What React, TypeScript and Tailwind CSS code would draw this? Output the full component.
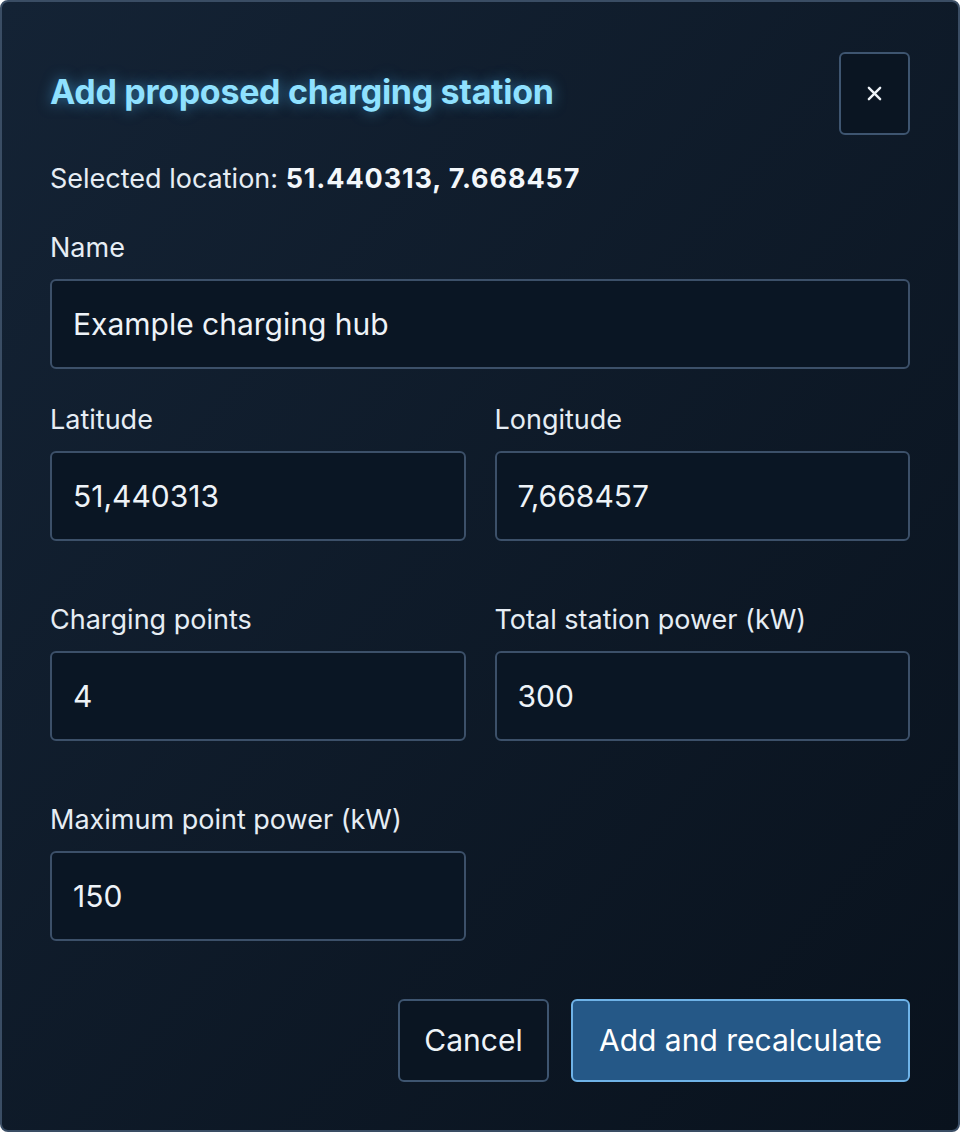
import React from 'react';

const Field = ({ label, value, className = '' }: { label: string; value: string; className?: string }) => (
  <label className={`flex flex-col ${className}`}>
    <span className="text-[27px] leading-[32px] text-[#e6edf4]">{label}</span>
    <input
      readOnly
      value={value}
      className="mt-[15px] h-[90px] w-full rounded-[6px] border-2 border-[#3c5069] bg-[#0a1624] px-[21px] text-[30px] text-[#eef3f8] outline-none"
    />
  </label>
);

export default function App() {
  return (
    <div
      className="h-[1132px] w-[960px] rounded-[8px] border-2 border-[#3a4d64] bg-gradient-to-br from-[#142335] to-[#09121d] pl-[48px] pr-[48px] pt-[50px]"
      style={{ fontFamily: 'Inter, "Noto Sans", sans-serif' }}
    >
      {/* Header */}
      <div className="flex h-[83px] items-center justify-between">
        <h2
          className="mb-[4px] text-[34px] font-bold tracking-[-0.3px] text-[#8fe1ff]"
          style={{ textShadow: '0 0 14px rgba(80, 190, 255, 0.55)' }}
        >
          Add proposed charging station
        </h2>
        <button className="flex h-[83px] w-[71px] items-center justify-center rounded-[6px] border-2 border-[#3e5570] bg-[#0a1522] text-[#eef3f8]">
          <svg width="15" height="15" viewBox="0 0 16 16" fill="none" stroke="currentColor" strokeWidth="2.6" strokeLinecap="round">
            <path d="M2 2 L14 14 M14 2 L2 14" />
          </svg>
        </button>
      </div>

      <p className="mt-[28px] text-[27px] leading-[32px] text-[#e6edf4]">
        Selected location: <span className="font-bold tracking-[0.9px] text-[#f3f7fb]">51.440313, 7.668457</span>
      </p>

      <Field label="Name" value="Example charging hub" className="mt-[37px]" />

      <div className="mt-[35px] grid grid-cols-2 gap-x-[29px] gap-y-[63px]">
        <Field label="Latitude" value="51,440313" />
        <Field label="Longitude" value="7,668457" />
        <Field label="Charging points" value="4" />
        <Field label="Total station power (kW)" value="300" />
        <Field label="Maximum point power (kW)" value="150" />
      </div>

      {/* Actions */}
      <div className="mt-[58px] flex justify-end gap-[22px]">
        <button className="h-[83px] w-[151px] rounded-[6px] border-2 border-[#3e5570] bg-[#0a1522] text-[30px] text-[#eef3f8]">
          Cancel
        </button>
        <button className="h-[83px] w-[339px] rounded-[6px] border-2 border-[#6fb3e8] bg-[#255887] text-[30px] text-white">
          Add and recalculate
        </button>
      </div>
    </div>
  );
}
